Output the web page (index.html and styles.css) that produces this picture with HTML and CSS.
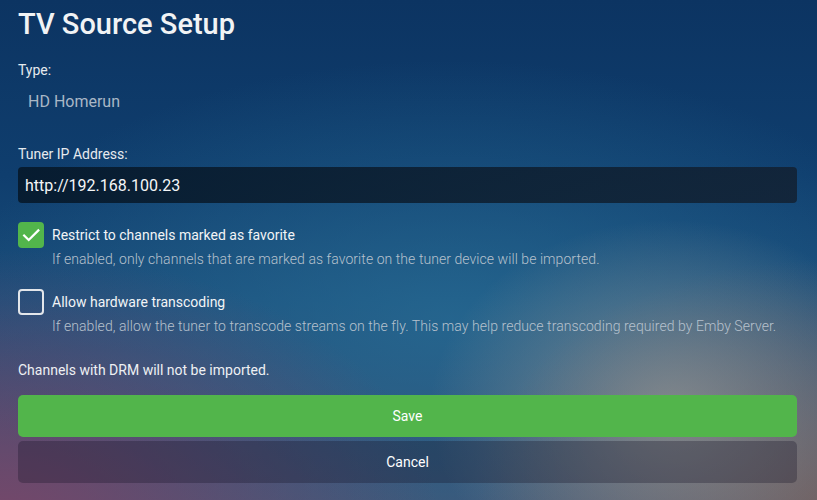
FILE: index.html
```html
<!DOCTYPE html>
<html>
<head>
<meta charset="utf-8">
<link rel="stylesheet" href="styles.css">
</head>
<body>
<div class="page">
  <h1 class="title">TV Source Setup</h1>
  <div class="label type-label">Type:</div>
  <div class="type-value">HD Homerun</div>
  <div class="label ip-label">Tuner IP Address:</div>
  <div class="input">http://192.168.100.23</div>

  <div class="check-row first">
    <span class="box checked">
      <svg viewBox="0 0 24 24" width="22" height="22"><path d="M4.5 12.5l5 5L20 7" fill="none" stroke="#fff" stroke-width="2.4" stroke-linecap="square"/></svg>
    </span>
    <div class="check-text">
      <div class="check-label">Restrict to channels marked as favorite</div>
      <div class="check-desc">If enabled, only channels that are marked as favorite on the tuner device will be imported.</div>
    </div>
  </div>

  <div class="check-row second">
    <span class="box"></span>
    <div class="check-text">
      <div class="check-label">Allow hardware transcoding</div>
      <div class="check-desc">If enabled, allow the tuner to transcode streams on the fly. This may help reduce transcoding required by Emby Server.</div>
    </div>
  </div>

  <div class="note">Channels with DRM will not be imported.</div>

  <div class="buttons">
    <div class="btn save">Save</div>
    <div class="btn cancel">Cancel</div>
  </div>
</div>
</body>
</html>
```
FILE: styles.css
```css
html, body {
  margin: 0;
  padding: 0;
  height: 100%;
}
body {
  font-family: Roboto, "Liberation Sans", sans-serif;
  color: #fff;
  background-color: #0b3160;
  background-image:
    radial-gradient(ellipse 240px 190px at 670px 410px, rgba(150,150,148,0.75) 0%, rgba(150,150,148,0) 100%),
    radial-gradient(ellipse 340px 240px at 817px 500px, rgba(110,90,90,0.9) 0%, rgba(110,90,90,0) 100%),
    radial-gradient(ellipse 440px 270px at 0px 520px, rgba(120,70,105,0.95) 0%, rgba(120,70,105,0) 100%),
    radial-gradient(ellipse 500px 260px at 450px 320px, rgba(40,110,150,0.7) 0%, rgba(40,110,150,0) 100%),
    linear-gradient(to bottom, #0c3462 0%, #0f3e6e 35%, #1a4d7a 60%, #3e5576 100%);
  overflow: hidden;
}
.page {
  padding: 0 20px 0 18px;
}
.title {
  margin: 7px 0 0;
  font-size: 29px;
  font-weight: 500;
  line-height: 34px;
  color: #f1f3f5;
}
.label {
  font-size: 14px;
  line-height: 20px;
  color: #e6eaee;
}
.type-label {
  margin-top: 19px;
}
.type-value {
  margin-top: 10px;
  padding-left: 10px;
  font-size: 16px;
  line-height: 24px;
  color: #a9b7c6;
}
.ip-label {
  margin-top: 30px;
}
.input {
  margin-top: 3px;
  height: 36px;
  box-sizing: border-box;
  padding: 0 7px;
  display: flex;
  align-items: center;
  font-size: 16px;
  color: #f4f6f8;
  border-radius: 4px;
  background: linear-gradient(to right, rgba(5,22,38,0.85), rgba(18,30,45,0.8));
}
.check-row {
  display: flex;
  gap: 8px;
  align-items: flex-start;
}
.check-row.first {
  margin-top: 19px;
}
.check-row.second {
  margin-top: 21px;
}
.box {
  flex: none;
  width: 26px;
  height: 26px;
  box-sizing: border-box;
  border-radius: 4px;
  border: 2px solid #e3e6ea;
  display: flex;
  align-items: center;
  justify-content: center;
}
.box.checked {
  border: none;
  background: #52b54b;
}
.check-label {
  margin-top: 3px;
  font-size: 14px;
  line-height: 20px;
  color: #f2f4f6;
}
.check-desc {
  margin-top: 5px;
  font-size: 14px;
  font-weight: 300;
  letter-spacing: 0.06px;
  line-height: 18px;
  color: #b6c1cd;
}
.note {
  margin-top: 25px;
  font-size: 14px;
  line-height: 20px;
  color: #eef0f3;
}
.buttons {
  margin-top: 15px;
  display: flex;
  flex-direction: column;
  gap: 4px;
}
.btn {
  height: 42px;
  border-radius: 5px;
  display: flex;
  align-items: center;
  justify-content: center;
  font-size: 14px;
  color: #fff;
}
.save {
  background: #52b54b;
}
.cancel {
  background: rgba(20,15,35,0.3);
}
```
